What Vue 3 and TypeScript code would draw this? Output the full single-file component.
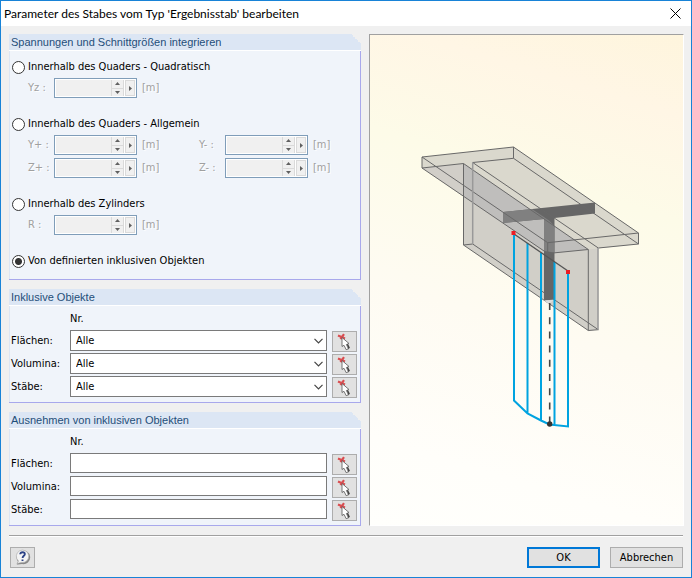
<script setup lang="ts">
import { ref } from 'vue'

interface SpinField { id: string; label: string }
interface Option { value: string; label: string; fields: SpinField[] }

const options: Option[] = [
  { value: 'square', label: 'Innerhalb des Quaders - Quadratisch', fields: [{ id: 'yz', label: 'Yz :' }] },
  {
    value: 'general',
    label: 'Innerhalb des Quaders - Allgemein',
    fields: [
      { id: 'y-plus', label: 'Y+ :' },
      { id: 'y-minus', label: 'Y- :' },
      { id: 'z-plus', label: 'Z+ :' },
      { id: 'z-minus', label: 'Z- :' },
    ],
  },
  { value: 'cylinder', label: 'Innerhalb des Zylinders', fields: [{ id: 'r', label: 'R :' }] },
  { value: 'objects', label: 'Von definierten inklusiven Objekten', fields: [] },
]

const kinds = [
  { id: 'surfaces', label: 'Flächen:' },
  { id: 'solids', label: 'Volumina:' },
  { id: 'members', label: 'Stäbe:' },
]

const mode = ref('objects')
const included = ref<Record<string, string>>({ surfaces: 'Alle', solids: 'Alle', members: 'Alle' })
const excluded = ref<Record<string, string>>({ surfaces: '', solids: '', members: '' })
</script>

<template>
  <div class="dialog">
    <header class="titlebar">
      <h1>Parameter des Stabes vom Typ 'Ergebnisstab' bearbeiten</h1>
      <button class="close" type="button" aria-label="Schließen">
        <svg width="11" height="11" viewBox="0 0 11 11"><path d="M.5 .5l10 10M10.5 .5l-10 10" /></svg>
      </button>
    </header>

    <main class="content">
      <div class="forms">
        <section class="group">
          <h2>Spannungen und Schnittgrößen integrieren</h2>
          <div class="options">
            <div v-for="opt in options" :key="opt.value">
              <label class="radio">
                <input v-model="mode" type="radio" name="mode" :value="opt.value" />
                <span>{{ opt.label }}</span>
              </label>
              <div v-if="opt.fields.length" class="fields">
                <div v-for="field in opt.fields" :key="field.id" class="field">
                  <label :for="field.id">{{ field.label }}</label>
                  <div class="spin">
                    <input :id="field.id" type="text" disabled />
                    <div class="steps">
                      <button type="button" disabled aria-label="Erhöhen">
                        <svg width="5" height="3" viewBox="0 0 5 3"><path d="M0 3L2.5 0L5 3z" /></svg>
                      </button>
                      <button type="button" disabled aria-label="Verringern">
                        <svg width="5" height="3" viewBox="0 0 5 3"><path d="M0 0L2.5 3L5 0z" /></svg>
                      </button>
                    </div>
                    <button class="more" type="button" disabled aria-label="Weitere Werte">
                      <svg width="3" height="5" viewBox="0 0 3 5"><path d="M0 0L3 2.5L0 5z" /></svg>
                    </button>
                  </div>
                  <span class="unit">[m]</span>
                </div>
              </div>
            </div>
          </div>
        </section>

        <section class="group">
          <h2>Inklusive Objekte</h2>
          <div class="objects">
            <span class="number">Nr.</span>
            <div v-for="kind in kinds" :key="kind.id" class="row">
              <label :for="'in-' + kind.id">{{ kind.label }}</label>
              <div class="combo">
                <select :id="'in-' + kind.id" v-model="included[kind.id]"><option>Alle</option></select>
                <svg width="9" height="6" viewBox="0 0 9 6"><path d="M.5 .8l4 4 4-4" /></svg>
              </div>
              <button class="pick" type="button" :aria-label="kind.label + ' auswählen'">
                <svg width="15" height="18" viewBox="0 0 15 18">
                  <path class="mark" d="M1 2.5l7 3M7 1.2l-3.500 5" />
                  <path class="shade" d="M10.200 11l1.800 3.600-1.500 1.400" />
                  <path class="arrow" d="M5 4.500v9l2-1.200 2.200 4.400 2.200-1-2-4.200 2.600-1z" />
                </svg>
              </button>
            </div>
          </div>
        </section>

        <section class="group">
          <h2>Ausnehmen von inklusiven Objekten</h2>
          <div class="objects">
            <span class="number">Nr.</span>
            <div v-for="kind in kinds" :key="kind.id" class="row">
              <label :for="'ex-' + kind.id">{{ kind.label }}</label>
              <input :id="'ex-' + kind.id" v-model="excluded[kind.id]" class="text" type="text" />
              <button class="pick" type="button" :aria-label="kind.label + ' auswählen'">
                <svg width="15" height="18" viewBox="0 0 15 18">
                  <path class="mark" d="M1 2.5l7 3M7 1.2l-3.500 5" />
                  <path class="shade" d="M10.200 11l1.800 3.600-1.500 1.400" />
                  <path class="arrow" d="M5 4.500v9l2-1.200 2.200 4.400 2.200-1-2-4.200 2.600-1z" />
                </svg>
              </button>
            </div>
          </div>
        </section>
      </div>

      <div class="preview">
        <svg viewBox="370 35 313 490" role="img" aria-label="T-Querschnitt mit Ergebnisstab">
          <!-- flange and web -->
          <path class="web" d="M463.500 163.500L472.700 162.500L598.300 248V329.700L588.300 330.500L463.500 245z" />
          <path class="top" d="M422 157L513.500 147L638.500 233V244L588.300 249.500L463.500 163.500L422 168z" />
          <path class="side" d="M422 168L463.500 163.500V196.500z" />
          <path class="overlap" d="M463.500 163.500L588.300 249.500L547.700 253.500L463.500 196z" />
          <!-- cut section -->
          <path class="cut" d="M503 212L595 202.500V213.500L554.500 218V299.500L544 300.500V219L503 223z" />
          <path class="cut-light" d="M503 212L532 209L549 220.500L554.500 226V252.500L544 251V219L503 223z" />
          <g class="edges">
            <path d="M422 157L513.500 147L638.500 233L547.700 242.700zM422 168L547.700 253.500L588.300 249.500M598.300 248L638.500 244L513.500 158.300L472.700 162.500M422 168L463.500 163.500M422 157V168M513.500 147V158.300M638.500 233V244M547.700 242.700V253.500" />
            <path d="M463.500 163.500V245L588.300 330.500V249.500zM463.500 245L472.700 244L598.300 329.700L588.300 330.500M472.700 162.500L598.300 248" />
          </g>
          <path class="soft" d="M472.700 162.500V244M598 248V329.700" />
          <path class="end" d="M544 300.500L549 304L553.500 300z" />
          <!-- result curve -->
          <path class="result" d="M514 233V400.500L527.500 413.500L541 420.500L549.500 424.500L568 426.500V272M527.500 243V413.500M541 253V420.500M554.500 262V425" />
          <path class="member" d="M514 234L568 271" />
          <path class="axis" d="M549.700 303V424" />
          <circle cx="549.700" cy="424" r="2.700" class="node" />
          <path class="support" d="M511.500 231h4v4h-4zM566 270h4v4h-4z" />
        </svg>
      </div>
    </main>

    <footer class="footer">
      <button class="help" type="button" aria-label="Hilfe">
        <svg width="17" height="17" viewBox="0 0 17 17">
          <path class="bubble-shadow" d="M4 15.500c-1 .3-1.500 0-1-1L4 12.500A6.800 6.800 0 1 1 8 15z" />
          <path class="bubble" d="M3 14.500L4.500 12A6.200 6.200 0 1 1 7.500 13.400z" />
          <path class="question" d="M6.200 5.300c.2-2.800 5-2.800 4.600 0-.2 1.500-2.200 1.600-2.200 3.700M8.500 10.500v1.500" />
        </svg>
      </button>
      <div class="actions">
        <button class="action primary" type="button">OK</button>
        <button class="action" type="button">Abbrechen</button>
      </div>
    </footer>
  </div>
</template>

<style>
body { margin: 0; }
</style>

<style scoped>
* { box-sizing: border-box; }

.dialog {
  display: flex;
  flex-direction: column;
  min-height: 100vh;
  border: 1px solid #1883d7;
  background: #f0f0f0;
  color: #000;
  font: 11px/14px "DejaVu Sans Condensed", "Noto Sans", sans-serif;
}
button, input, select { margin: 0; padding: 0; font: inherit; color: inherit; }
svg { display: block; }

.titlebar {
  display: flex;
  align-items: center;
  justify-content: space-between;
  height: 25px;
  padding: 0 10px 0 3px;
  background: #fff;
}
h1 { margin: 0; font: 12px/16px Lato, sans-serif; }
.close { border: 0; background: none; }
.close path { fill: none; stroke: #000; }

.content {
  display: grid;
  grid-template-columns: 352px minmax(0, 1fr);
  gap: 8px;
  flex: 1;
  padding: 8px 7px 8px 8px;
}
.forms { display: flex; flex-direction: column; gap: 9px; }

.group {
  position: relative;
  border: solid #a8a8ec;
  border-width: 0 1px 1px 0;
  background: #f0f4fa;
  box-shadow: inset 1px 0 #dce6f4;
}
.group::after {
  content: "";
  position: absolute;
  top: 0;
  right: -1px;
  width: 10px;
  height: 10px;
  background: linear-gradient(to top right, transparent 50%, #f0f0f0 50%);
}
h2 {
  height: 17px;
  margin: 0 -1px 0 0;
  padding-left: 2px;
  border-bottom: 1px solid #fff;
  background: #dce6f4;
  color: #1f4e79;
  font: 11px/17px "Liberation Sans", sans-serif;
}

.options { display: flex; flex-direction: column; gap: 15px; padding: 5px 3px 7px; }
.radio { display: flex; align-items: center; gap: 3px; height: 22px; }
.radio input {
  appearance: none;
  width: 13px;
  height: 13px;
  border: 1px solid #333;
  border-radius: 50%;
  background: #fff;
}
.radio input:checked { background: radial-gradient(circle, #333 3px, #fff 4px); }
.fields {
  display: grid;
  grid-template-columns: 171px 1fr;
  row-gap: 3px;
  padding-left: 16px;
}
.field { display: flex; align-items: center; color: #a0a0a0; text-shadow: 1px 1px #fff; }
.field label { width: 26px; }
.spin {
  display: flex;
  width: 83px;
  height: 20px;
  padding: 1px;
  border: 1px solid #7f9db9;
  background: #fff;
}
.spin input { flex: 1; min-width: 0; border: 0; background: #f0f0f0; }
.steps { display: grid; gap: 1px; width: 13px; background: #dadada; }
.spin button {
  display: grid;
  place-items: center;
  border: 1px solid #dadada;
  background: #f0f0f0;
}
.steps button { border-width: 0 1px; }
.spin .more { width: 10px; margin-left: 1px; }
.spin path { fill: #606060; }
.unit { margin-left: 5px; }

.objects { display: flex; flex-direction: column; gap: 1px; padding: 0 3px 4px 2px; }
.number { height: 23px; padding-left: 59px; line-height: 26px; }
.row { display: grid; grid-template-columns: 59px minmax(0, 1fr) 30px; height: 22px; }
.row label { line-height: 22px; }
.combo { display: grid; height: 21px; }
.combo select, .combo svg { grid-area: 1 / 1; }
.combo select {
  appearance: none;
  padding-left: 5px;
  border: 1px solid #7a7a7a;
  border-radius: 0;
  background: #fff;
}
.combo svg { place-self: center end; margin-right: 4px; pointer-events: none; }
.combo path { fill: none; stroke: #444; stroke-width: 1.2; }
.text { height: 20px; padding: 0 5px; border: 1px solid #7a7a7a; background: #fff; }
.pick, .help {
  display: grid;
  place-items: center;
  width: 25px;
  height: 21px;
  border: 1px solid #adadad;
  background: #e1e1e1;
}
.pick { place-self: end; }
.mark { fill: none; stroke: #d94d50; stroke-width: 2.2; }
.arrow { fill: #fff; stroke: #555; stroke-width: .8; }
.shade { fill: none; stroke: #444; stroke-width: 1.5; }

.preview {
  align-self: start;
  border: 1px solid;
  border-color: #a0a0a0 #fff #fff #a0a0a0;
  background: linear-gradient(197deg, #fef5dd, #fff6e5 14%, #fdfbe8 32%, #fefbf2 58%, #fffefa 85%, #fffffc);
}
.preview svg { width: 100%; }
.top { fill: #dad8cd; }
.side { fill: #d1cec8; }
.web { fill: #d1cfc8; }
.overlap { fill: #bfbebc; }
.cut { fill: #666; }
.cut-light { fill: #808080; }
.edges { fill: none; stroke: #686868; stroke-width: 1; }
.soft { fill: none; stroke: #999; stroke-width: 1.5; }
.end { fill: #ddd; }
.result { fill: none; stroke: #00a3e0; stroke-width: 2; }
.member { fill: none; stroke: #555; stroke-width: 1.3; }
.axis { fill: none; stroke: #444; stroke-width: 1.6; stroke-dasharray: 7 7.2; }
.node { fill: #333; }
.support { fill: #ed1c24; }

.footer {
  display: flex;
  align-items: center;
  justify-content: space-between;
  margin: 0 8px;
  padding: 11px 0 9px 1px;
  border-top: 1px solid #a0a0a0;
  box-shadow: inset 0 1px #fff;
}
.bubble-shadow { fill: #888; }
.bubble { fill: #f4f4f4; stroke: #aaa; stroke-width: .6; }
.question { fill: none; stroke: #2d4387; stroke-width: 1.9; }
.actions { display: flex; gap: 10px; }
.action { width: 73px; height: 21px; border: 1px solid #adadad; background: #e1e1e1; }
.primary { border: 2px solid #0078d7; }
</style>
